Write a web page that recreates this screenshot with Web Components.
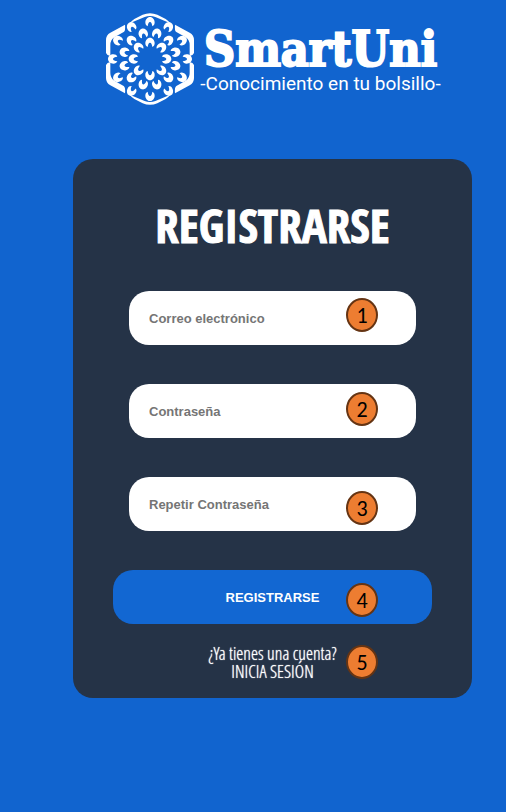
<!DOCTYPE html>
<html lang="es">
<head>
<meta charset="utf-8">
<meta name="viewport" content="width=device-width, initial-scale=1">
<title>SmartUni - Registrarse</title>
<style>
body{margin:0;min-height:100vh;background:#1164cf;font-family:"Liberation Sans",Arial,sans-serif;color:#fff}
</style>
</head>
<body>
<register-page></register-page>
<script>
function define(name, html, setup) {
  const template = document.createElement('template');
  template.innerHTML = html;
  customElements.define(name, class extends HTMLElement {
    connectedCallback() {
      if (this.shadowRoot) return;
      const root = this.attachShadow({ mode: 'open' });
      root.append(template.content.cloneNode(true));
      if (setup) setup(this, root);
    }
  });
}

define('uni-emblem', `
<style>:host{display:block;width:92px;height:94px;flex:none}svg{display:block;width:100%;height:100%}</style>
<svg viewBox="-138 -141 276 282" fill="#fff" aria-hidden="true">
  <g id="rings"></g>
  <g id="frame">
    <path d="M-61-107Q-55-115-47-120L-22-133Q0-142 22-133L47-120Q55-115 61-107L16-126Q0-132-16-126Z"/>
    <path id="side" d="M-75-103L-119-79Q-132-72-132-57V-18Q-129-10-119-9V-42Q-119-57-107-65L-79-81Q-73-85-75-103Z"/>
  </g>
</svg>`, (host, root) => {
  const ns = 'http://www.w3.org/2000/svg';
  const rings = root.getElementById('rings');
  for (const [radius, count, start] of [[112, 12, 0], [80, 12, 15], [50, 8, 0]]) {
    for (let i = 0; i < count; i++) {
      const petal = document.createElementNS(ns, 'path');
      petal.setAttribute('d', 'M0-14C8-14 14-6 14 2C14 8 12 12 7 14C6 7 4 1 0 1C-4 1-6 7-7 14C-12 12-14 8-14 2C-14-6-8-14 0-14Z');
      petal.setAttribute('transform', `rotate(${start + i * 360 / count}) translate(0 ${-radius})`);
      rings.append(petal);
    }
  }
  const frame = root.getElementById('frame');
  const cap = frame.children[0].cloneNode();
  cap.setAttribute('transform', 'scale(1 -1)');
  frame.append(cap);
  for (const flip of ['-1 1', '1 -1', '-1 -1']) {
    const side = root.getElementById('side').cloneNode();
    side.removeAttribute('id');
    side.setAttribute('transform', `scale(${flip})`);
    frame.append(side);
  }
});

define('uni-logo', `
<style>
:host{display:flex;align-items:center;justify-content:center;gap:4px}
.words{display:flex;flex-direction:column;align-items:center}
.name{font:bold 48px/50px "DejaVu Serif Condensed","DejaVu Serif",serif;font-stretch:condensed;-webkit-text-stroke:2px #fff}
.tag{font:400 19px/20px Roboto,sans-serif;white-space:nowrap}
</style>
<uni-emblem></uni-emblem>
<div class="words"><span class="name">SmartUni</span><span class="tag">-Conocimiento en tu bolsillo-</span></div>`);

define('step-badge', `
<style>
:host{position:absolute;right:54px;top:var(--top,8px);box-sizing:border-box;width:32px;height:34px;border:2px solid #653413;border-radius:50%;background:#ed7d31;color:#000;font:22px/32px Carlito,"Noto Sans",sans-serif;text-align:center}
</style><slot></slot>`);

define('form-field', `
<style>
:host{display:block;position:relative;padding:0 16px}
input{display:block;box-sizing:border-box;width:100%;height:54px;border:0;border-radius:20px;padding:0 20px;background:#fff;color:#253347;font:bold 13px "Liberation Sans",Arial,sans-serif}
input::placeholder{color:#757575;opacity:1}
</style>
<input><slot></slot>`, (host, root) => {
  const input = root.querySelector('input');
  input.type = host.getAttribute('type');
  input.placeholder = host.getAttribute('label');
  input.setAttribute('aria-label', host.getAttribute('label'));
});

define('submit-button', `
<style>
:host{display:block;position:relative}
button{display:block;width:100%;height:54px;border:0;border-radius:20px;background:#1267d2;color:#fff;font:bold 13px "Liberation Sans",Arial,sans-serif}
</style>
<button type="submit">REGISTRARSE</button><slot></slot>`);

define('login-prompt', `
<style>
:host{display:block;position:relative;text-align:center;font:300 18px/18px "Open Sans Condensed Light","Open Sans Condensed","Roboto Condensed","Liberation Sans",sans-serif}
p{margin:0}
p,a{text-shadow:0 0 1px #fff}
a{color:#fff;text-decoration:none}
</style>
<p>¿Ya tienes una cuenta?</p><a href="#login">INICIA SESIÓN</a><slot></slot>`);

define('register-card', `
<style>
:host{display:block;background:#253347;border-radius:20px;padding:39px 40px 18px}
h1{margin:0 0 39px;text-align:center;font:bold 47px/54px "Open Sans Condensed","Roboto Condensed","Liberation Sans",sans-serif;-webkit-text-stroke:1px #fff}
form{display:flex;flex-direction:column;gap:39px;margin:0 0 20px}
</style>
<h1>REGISTRARSE</h1>
<form>
  <form-field type="email" label="Correo electrónico"><step-badge style="--top:7px">1</step-badge></form-field>
  <form-field type="password" label="Contraseña"><step-badge style="--top:8px">2</step-badge></form-field>
  <form-field type="password" label="Repetir Contraseña"><step-badge style="--top:14px">3</step-badge></form-field>
  <submit-button><step-badge style="--top:13px">4</step-badge></submit-button>
</form>
<login-prompt><step-badge style="--top:1px">5</step-badge></login-prompt>`);

define('register-page', `
<style>
:host{display:block;padding:12px 34px 40px 73px}
uni-logo{margin-bottom:53px}
</style>
<uni-logo></uni-logo><register-card></register-card>`);
</script>
</body>
</html>
